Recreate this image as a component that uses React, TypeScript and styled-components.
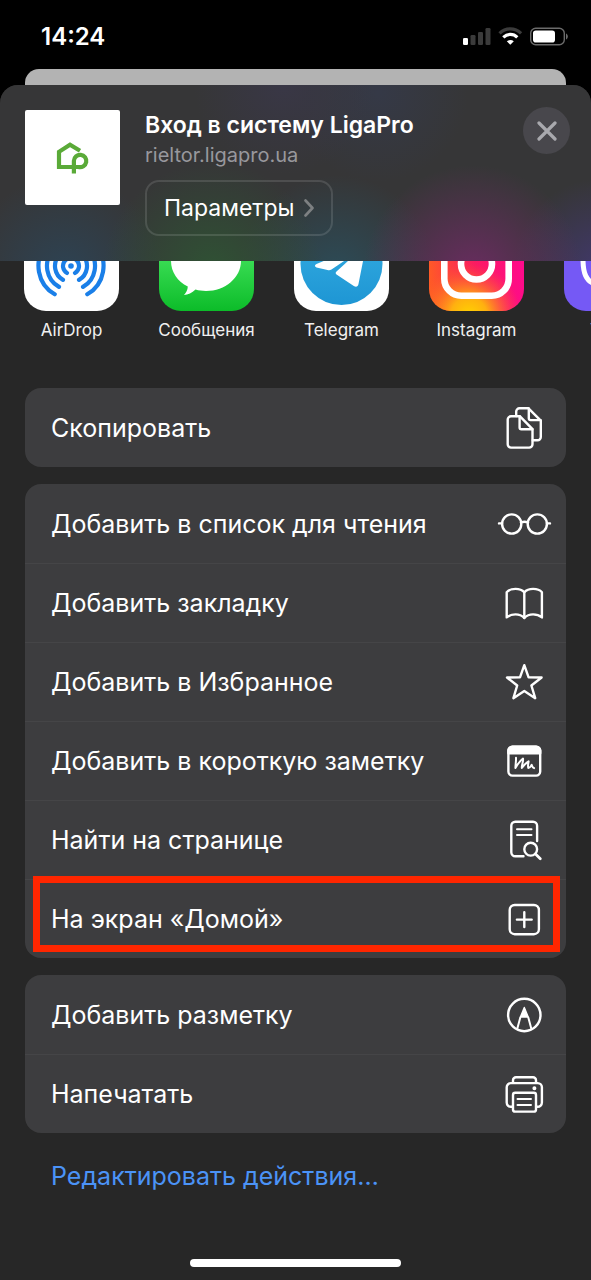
import React from "react";
import styled, { createGlobalStyle } from "styled-components";

const GlobalStyle = createGlobalStyle`
  * { box-sizing: border-box; }
  body {
    margin: 0;
    background: #000;
    color: #fff;
    font-family: Inter, "Noto Sans", sans-serif;
    overflow-x: hidden;
  }
  button { font: inherit; color: inherit; border: 0; background: none; padding: 0; cursor: pointer; }
  svg { display: block; flex-shrink: 0; }
`;

const Screen = styled.div`
  display: flex;
  flex-direction: column;
  min-height: 100vh;
  background: #000;
`;

const StatusBar = styled.div`
  display: flex;
  justify-content: space-between;
  align-items: center;
  height: 69px;
  padding: 4px 23px 0 41px;
`;

const Clock = styled.time`
  font-size: 24px;
  line-height: 28px;
  font-weight: 600;
`;

const PageBehind = styled.div`
  height: 16px;
  margin: 0 25px;
  background: #b3b3b3;
  border-radius: 14px 14px 0 0;
`;

const Sheet = styled.main`
  flex: 1;
  display: flex;
  flex-direction: column;
  background: #272727;
  border-radius: 18px 18px 0 0;
  overflow: hidden;
`;

const Header = styled.header`
  display: flex;
  align-items: flex-start;
  height: 176px;
  padding: 25px 21px 0 25px;
  background:
    radial-gradient(circle 110px at 80% 108%, #6a2c60 0%, #6a2c6000 100%),
    radial-gradient(circle 110px at 36% 106%, #2f5234 0%, #2f523400 100%),
    radial-gradient(circle 100px at 11% 108%, #2d4354 0%, #2d435400 100%),
    radial-gradient(circle 100px at 57% 108%, #2c4c58 0%, #2c4c5800 100%),
    radial-gradient(circle 90px at 102% 104%, #41386a 0%, #41386a00 100%),
    radial-gradient(circle 90px at 48% 0%, #393746 0%, #39374600 100%),
    radial-gradient(circle 90px at 64% 4%, #353947 0%, #35394700 100%),
    #363637;
`;

const SiteIcon = styled.div`
  display: grid;
  place-items: center;
  width: 95px;
  height: 95px;
  background: #fff;
  border-radius: 2px;
`;

const SiteInfo = styled.div`
  flex: 1;
  display: flex;
  flex-direction: column;
  align-items: flex-start;
  padding-left: 25px;
`;

const SiteTitle = styled.h1`
  margin: 0;
  font-size: 23px;
  line-height: 30px;
  font-weight: 600;
`;

const SiteHost = styled.p`
  margin: 0 0 10px;
  font-size: 20px;
  line-height: 30px;
  color: #98989d;
`;

const OptionsButton = styled.button`
  display: flex;
  align-items: center;
  gap: 10px;
  height: 56px;
  padding: 0 17px;
  border: 2px solid #ffffff1f;
  border-radius: 14px;
  font-size: 23px;
  line-height: 30px;
`;

const CloseButton = styled.button`
  display: grid;
  place-items: center;
  width: 47px;
  height: 47px;
  margin-top: -3px;
  border-radius: 50%;
  background: #48474c;
`;

const AppRow = styled.div`
  display: flex;
  align-items: flex-end;
  height: 83px;
  padding-left: 4px;
  overflow: hidden;
`;

const AppItem = styled.button`
  display: flex;
  flex-direction: column;
  align-items: center;
  flex: 0 0 135px;
  gap: 5px;
  font-size: 17px;
  line-height: 28px;
  color: #f0f0f0;
`;

const Actions = styled.div`
  display: flex;
  flex-direction: column;
  gap: 17px;
  padding: 44px 25px 0;
`;

const Card = styled.div`
  display: flex;
  flex-direction: column;
  background: #3d3d3f;
  border-radius: 16px;
`;

const Row = styled.button`
  position: relative;
  display: flex;
  align-items: center;
  justify-content: space-between;
  height: 79px;
  padding: 0 14px 0 26px;
  font-size: 25px;
  line-height: 32px;
  text-align: left;

  & + & { border-top: 1px solid #454547; }
`;

const Highlight = styled.span`
  position: absolute;
  inset: -4px 6px 6px 8px;
  border: 7px solid #ff2600;
`;

const EditButton = styled.button`
  align-self: flex-start;
  margin: 27px 51px 0;
  font-size: 25px;
  line-height: 32px;
  color: #4b93f7;
`;

const HomeIndicator = styled.div`
  width: 211px;
  height: 8px;
  margin: auto auto 13px;
  border-radius: 4px;
  background: #fff;
`;

const Glyph = ({ children }: { children: React.ReactNode }) => (
  <svg
    width="56"
    height="44"
    viewBox="0 0 56 44"
    fill="none"
    stroke="#fff"
    strokeWidth="2.4"
    strokeLinecap="round"
    strokeLinejoin="round"
    aria-hidden="true"
  >
    {children}
  </svg>
);

const CopyGlyph = () => (
  <Glyph>
    <path d="M24 10.3H15a3.3 3.3 0 0 0-3.3 3.3v24.7a3.3 3.3 0 0 0 3.3 3.3h18.2a3.3 3.3 0 0 0 3.3-3.3V23.2Z" />
    <path d="M23.6 10.3v11.2a1.8 1.8 0 0 0 1.8 1.8h11" />
    <path d="M20.2 10V5.6a3.3 3.3 0 0 1 3.3-3.3h9L44.8 14.6v16.4a3.3 3.3 0 0 1-3.3 3.3H36.8" />
    <path d="M32.8 2.5v9.8a1.8 1.8 0 0 0 1.8 1.8h10" />
  </Glyph>
);

const GlassesGlyph = () => (
  <Glyph>
    <circle cx="15.7" cy="22" r="9.6" />
    <circle cx="41.3" cy="22" r="9.6" />
    <path d="M25 20.4q3.5-1.4 7 0M3 21.4h3M51 21.4h3" />
  </Glyph>
);

const BookGlyph = () => (
  <Glyph>
    <path d="M28.3 11.2C26 8.7 22.5 7.9 19.5 7.9c-3.7 0-6.8 1-8.8 3.3v25.2c2.5-2 5.5-3 8.8-3 3.5 0 6.5 1.2 8.8 3.6 2.3-2.4 5.3-3.6 8.800-3.6 3.3 0 6.3 1 8.8 3V11.2c-2-2.3-5.1-3.3-8.8-3.3-3 0-6.5.8-8.8 3.3Z" />
    <path d="M28.3 11.2V37" />
  </Glyph>
);

const StarGlyph = () => (
  <Glyph>
    <path d="M28.3 5.2 32.6 17.4 45.6 17.5 35.4 25.5 39.2 38.2 28.3 30.9 17.4 38.2 21.2 25.5 11 17.5 24 17.4Z" />
  </Glyph>
);

const NoteGlyph = () => (
  <Glyph>
    <rect x="12.4" y="7.6" width="31.8" height="29" rx="4" />
    <path d="M12.4 14.300v-2.700a4 4 0 0 1 4-4h23.800a4 4 0 0 1 4 4v2.700Z" fill="#fff" />
    <path
      d="M20 18.800c.2 3.500-.6 6.800-.6 10.300 2-3.600 4.600-7.300 7.600-9.600.6 3-1.400 6.300-1.200 9.500 2-2.700 4-5 6.800-6.700-.2 2.300-1.200 4.800-.2 6.800 1.500 0 2.300-1.800 3.300-3.200.4 1.400 1 2.600 2.400 3.200"
      strokeWidth="2"
    />
  </Glyph>
);

const FindGlyph = () => (
  <Glyph>
    <path d="M27.500 38.300h-8.200a4 4 0 0 1-4-4V7.700a4 4 0 0 1 4-4h17.800a4 4 0 0 1 4 4V23" />
    <path d="M21 11.300h14.500M21 16.900h14.500" strokeWidth="2" />
    <circle cx="34.700" cy="31.200" r="6.400" />
    <path d="m39.500 36 4.800 4.800" strokeWidth="2.800" />
  </Glyph>
);

const AddGlyph = () => (
  <Glyph>
    <rect x="13.700" y="8" width="29.200" height="29.200" rx="5" />
    <path d="M28.300 15.200v14.800M20.900 22.600h14.800" />
  </Glyph>
);

const MarkupGlyph = () => (
  <Glyph>
    <circle cx="28.300" cy="22" r="16.200" />
    <path d="M28.300 14.500 32.200 24h-7.800Z" fill="#fff" strokeWidth="1.400" />
    <path d="M24.300 24.500 21.200 36M32.300 24.500 35.400 36" strokeWidth="2" />
  </Glyph>
);

const PrinterGlyph = () => (
  <Glyph>
    <path d="M17 10.500V8.200a3 3 0 0 1 3-3h17a3 3 0 0 1 3 3v2.300" />
    <path d="M16.500 34.800h-1.600a4.200 4.200 0 0 1-4.200-4.200V15.300a4.200 4.200 0 0 1 4.200-4.200h26.800a4.200 4.200 0 0 1 4.200 4.200v15.300a4.200 4.200 0 0 1-4.200 4.200h-1.600" />
    <rect x="17" y="20.800" width="23" height="18.800" rx="2.200" />
    <path d="M21.500 27h13.500M21.500 33h13.500" strokeWidth="2" />
    <circle cx="38.400" cy="16.300" r="1.300" fill="#fff" strokeWidth="1.400" />
  </Glyph>
);

const AppTile = ({ fill, children }: { fill: string; children: React.ReactNode }) => (
  <svg width="95" height="95" viewBox="0 0 95 95" fill="none" aria-hidden="true">
    <rect width="95" height="95" rx="22" fill={fill} />
    {children}
  </svg>
);

/* Broadcast arc open at the bottom by 60 degrees. */
const arc = (r: number) => {
  const dx = r * 0.5;
  const dy = r * 0.87;
  return `M${47 - dx} ${50 + dy}A${r} ${r} 0 1 1 ${47 + dx} ${50 + dy}`;
};

const AirDropTile = () => (
  <AppTile fill="#fff">
    <g stroke="#1a7fe8" strokeWidth="4.200" strokeLinecap="round">
      {[8, 16, 24, 32.5].map((r) => (
        <path key={r} d={arc(r)} />
      ))}
    </g>
    <circle cx="47" cy="50" r="2.800" fill="#1a7fe8" />
  </AppTile>
);

const MessagesTile = () => (
  <AppTile fill="url(#messages)">
    <defs>
      <linearGradient id="messages" x1="0" y1="0" x2="0" y2="1">
        <stop offset="0" stopColor="#5ff777" />
        <stop offset="1" stopColor="#0cbc29" />
      </linearGradient>
    </defs>
    <path
      d="M47 15c19.300 0 35 13.400 35 30S66.300 75 47 75c-4 0-7-.4-10.500-1.400C33 77 29 79 25 79c2-2.200 3.700-5 3.800-8.400C18.600 65.500 12 56 12 45c0-16.600 15.700-30 35-30Z"
      fill="#fff"
    />
  </AppTile>
);

const TelegramTile = () => (
  <AppTile fill="#fff">
    <defs>
      <linearGradient id="telegram" x1="0" y1="0" x2="0" y2="1">
        <stop offset="0" stopColor="#37aee2" />
        <stop offset="1" stopColor="#1e96d4" />
      </linearGradient>
    </defs>
    <circle cx="47.500" cy="48" r="41" fill="url(#telegram)" />
    <path
      d="M22.500 48 68 29c2.200-.8 4 .5 3.500 3.500L64.500 68c-.6 2.800-2.300 3.400-4.700 2.100L42.500 58.500c-1.200-1-1-2 0-3L60 39.500c.8-.7-.2-1-1.200-.4L37.500 53.500c-1.300.8-2.500 1-4 .5L22.500 51.500c-2-.8-2-2.600 0-3.500Z"
      fill="#fff"
    />
  </AppTile>
);

const InstagramTile = () => (
  <AppTile fill="url(#ig-base)">
    <defs>
      <linearGradient id="ig-base" x1="0" y1=".6" x2="1" y2=".5">
        <stop offset="0" stopColor="#ff5a26" />
        <stop offset=".5" stopColor="#fb1a63" />
        <stop offset="1" stopColor="#ff0a8c" />
      </linearGradient>
      <radialGradient id="ig-glow" cx=".42" cy="1.050" r=".55">
        <stop offset="0" stopColor="#ffd400" />
        <stop offset=".35" stopColor="#ffb010" />
        <stop offset="1" stopColor="#ff5a26" stopOpacity="0" />
      </radialGradient>
    </defs>
    <rect width="95" height="95" rx="22" fill="url(#ig-glow)" />
    <rect x="15.300" y="15.300" width="64.400" height="64.400" rx="17" stroke="#fff" strokeWidth="6.600" />
    <circle cx="47.500" cy="48" r="15.500" stroke="#fff" strokeWidth="6.600" />
    <circle cx="66" cy="29" r="4" fill="#fff" />
  </AppTile>
);

const ViberTile = () => (
  <AppTile fill="#7559f5">
    <path d="M48 17c-20 0-29 6-29 26 0 14 3 22 12 25v11l10-9.500c26 2 36-4 36-26.500 0-20-9-26-29-26Z" stroke="#fff" strokeWidth="5" />
    <path d="M36 31c4 14 11 22 23 26l4-6-7-5-4 3c-4-2-7-5-9-10l3-3-5-8Z" fill="#fff" />
  </AppTile>
);

const apps = [
  { name: "AirDrop", Tile: AirDropTile },
  { name: "Сообщения", Tile: MessagesTile },
  { name: "Telegram", Tile: TelegramTile },
  { name: "Instagram", Tile: InstagramTile },
  { name: "Viber", Tile: ViberTile },
];

const groups = [
  [{ label: "Скопировать", Icon: CopyGlyph }],
  [
    { label: "Добавить в список для чтения", Icon: GlassesGlyph },
    { label: "Добавить закладку", Icon: BookGlyph },
    { label: "Добавить в Избранное", Icon: StarGlyph },
    { label: "Добавить в короткую заметку", Icon: NoteGlyph },
    { label: "Найти на странице", Icon: FindGlyph },
    { label: "На экран «Домой»", Icon: AddGlyph, highlighted: true },
  ],
  [
    { label: "Добавить разметку", Icon: MarkupGlyph },
    { label: "Напечатать", Icon: PrinterGlyph },
  ],
] as { label: string; Icon: React.FC; highlighted?: boolean }[][];

const StatusIcons = () => (
  <svg width="106" height="20" viewBox="0 0 106 20" fill="none" aria-hidden="true">
    <rect x="1" y="11" width="5" height="7" rx="1.300" fill="#fff" />
    <g fill="#3b3b3b">
      <rect x="8.500" y="8" width="5" height="10" rx="1.300" />
      <rect x="16" y="5" width="5" height="13" rx="1.300" />
      <rect x="23.500" y="1" width="5" height="17" rx="1.300" />
    </g>
    <path d="M37.500 6.300c6.200-6 15.400-6 21.600 0" stroke="#3b3b3b" strokeWidth="3.200" />
    <path d="M41.300 10.300c4-3.900 10-3.900 14 0" stroke="#fff" strokeWidth="3.200" />
    <path d="M48.300 17.800 44.800 14.300c2-1.800 5-1.800 7 0Z" fill="#fff" />
    <rect x="68.700" y="1.200" width="33.600" height="16.600" rx="5" stroke="#6b6b6b" strokeWidth="1.400" />
    <rect x="71" y="3.400" width="22" height="12.200" rx="2.800" fill="#fff" />
    <path d="M104 6.500c2.400.8 2.400 5.200 0 6Z" fill="#6b6b6b" />
  </svg>
);

export default function App() {
  return (
    <>
      <GlobalStyle />
      <Screen>
        <StatusBar>
          <Clock>14:24</Clock>
          <StatusIcons />
        </StatusBar>
        <PageBehind />
        <Sheet>
          <Header>
            <SiteIcon>
              <svg width="34" height="34" viewBox="0 0 34 34" fill="none" stroke="#5aaa38" strokeWidth="4.200" aria-hidden="true">
                <path d="M24 9.800 14 3.700 3 10.800V26H22.500a6.200 6.200 0 1 0-4.600-6.200V32.500" />
              </svg>
            </SiteIcon>
            <SiteInfo>
              <SiteTitle>Вход в систему LigaPro</SiteTitle>
              <SiteHost>rieltor.ligapro.ua</SiteHost>
              <OptionsButton>
                Параметры
                <svg width="10" height="18" viewBox="0 0 10 18" fill="none" stroke="#7d8082" strokeWidth="2.600" strokeLinecap="round" strokeLinejoin="round" aria-hidden="true">
                  <path d="m1.500 1.500 7 7.500-7 7.500" />
                </svg>
              </OptionsButton>
            </SiteInfo>
            <CloseButton aria-label="Закрыть">
              <svg width="20" height="20" viewBox="0 0 20 20" stroke="#a9a9ae" strokeWidth="3.200" strokeLinecap="round" aria-hidden="true">
                <path d="m2 2 16 16M18 2 2 18" />
              </svg>
            </CloseButton>
          </Header>
          <AppRow>
            {apps.map(({ name, Tile }) => (
              <AppItem key={name}>
                <Tile />
                {name}
              </AppItem>
            ))}
          </AppRow>
          <Actions>
            {groups.map((rows, i) => (
              <Card key={i}>
                {rows.map(({ label, Icon, highlighted }) => (
                  <Row key={label}>
                    {label}
                    <Icon />
                    {highlighted && <Highlight />}
                  </Row>
                ))}
              </Card>
            ))}
          </Actions>
          <EditButton>Редактировать действия…</EditButton>
          <HomeIndicator />
        </Sheet>
      </Screen>
    </>
  );
}
